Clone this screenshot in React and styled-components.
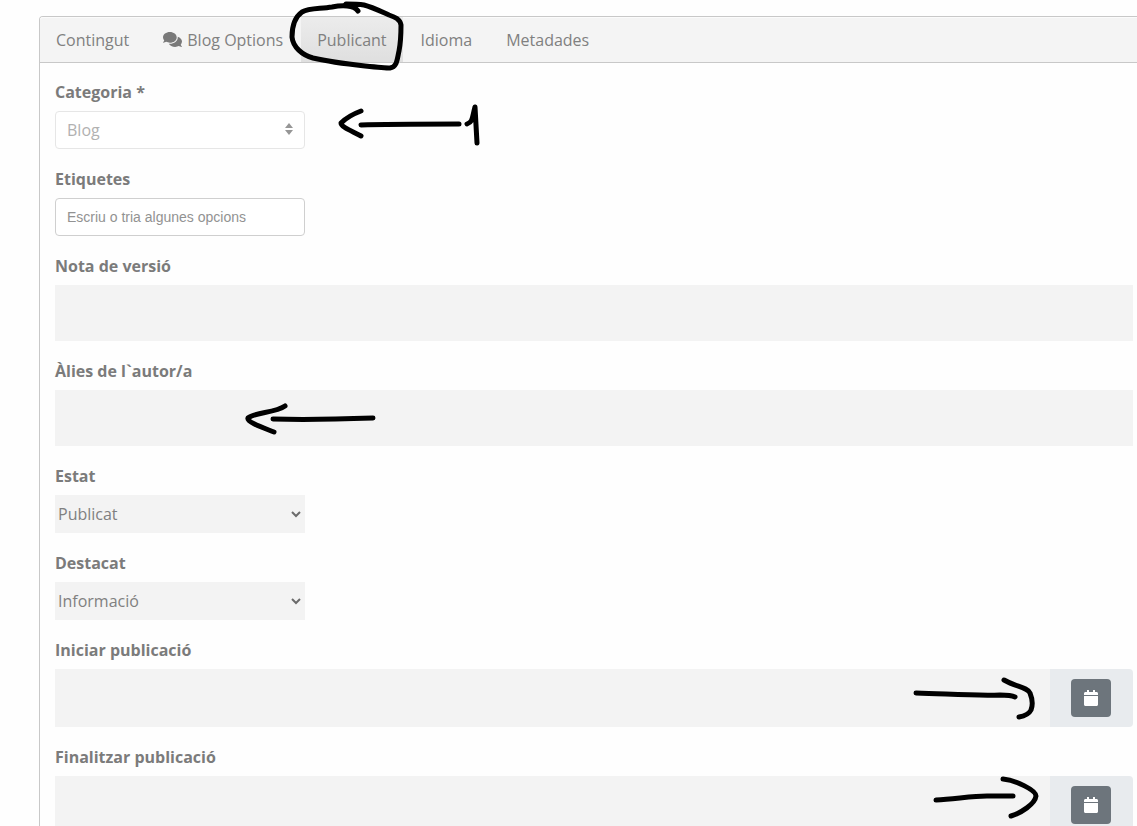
import React from "react";
import styled, { createGlobalStyle, css } from "styled-components";
import { FaCalendar, FaComments } from "react-icons/fa";

const GlobalStyle = createGlobalStyle`
  *, *::before, *::after { box-sizing: border-box; }
  body {
    margin: 0;
    background: #fefefe;
    color: #7b7b7b;
    font: 16px/24px "Open Sans", "Noto Sans", sans-serif;
  }
`;

const Page = styled.main`
  height: 100vh;
  overflow-x: hidden;
  overflow-y: auto;
  scrollbar-width: none;
  padding: 16px 0 0 39px;
`;

const Card = styled.section`
  border: 1px solid #c8c8c8;
  border-right: 0;
  border-radius: 4px 0 0 0;
`;

const TabBar = styled.nav`
  display: flex;
  gap: 2px;
  height: 46px;
  border-bottom: 1px solid #c8c8c8;
  border-radius: 3px 0 0 0;
  background: #f4f4f4;
  box-shadow: inset 0 1px 0 #fbfbfb;
`;

const TabItem = styled.div`
  position: relative;
  display: flex;
`;

const Tab = styled.button`
  display: flex;
  align-items: center;
  gap: 5px;
  padding: 0 16px;
  border: 0;
  background: ${(p) => (p.$active ? "linear-gradient(#ececec, #dfdfdf)" : "transparent")};
  color: #808080;
  font: inherit;
  white-space: nowrap;
  cursor: pointer;
`;

const CommentsIcon = styled(FaComments)`
  width: 19px;
  height: 17px;
  color: #797979;
`;

const Form = styled.form`
  display: flex;
  flex-direction: column;
  gap: 18px;
  padding: 17px 4px 18px 15px;
`;

const Field = styled.div`
  position: relative;
  display: flex;
  flex-direction: column;
  align-items: flex-start;
  gap: 7px;
`;

const Label = styled.label`
  color: #7b7b7b;
  font-weight: 700;
`;

const outlined = css`
  border: 1px solid ${(p) => (p.disabled ? "#e6e6e6" : "#cfcfcf")};
  border-radius: 4px;
  background: #fff;
  padding: 0 11px;
`;

const TagInput = styled.input`
  ${outlined}
  width: 250px;
  height: 38px;
  color: #7b7b7b;
  font: 14px "Liberation Sans", Arial, sans-serif;
  &::placeholder { color: #929292; opacity: 1; }
`;

const TextInput = styled.input`
  flex: 1;
  align-self: stretch;
  min-width: 0;
  min-height: 56px;
  padding: 0 12px;
  border: 0;
  background: #f3f3f3;
  color: inherit;
  font: inherit;
`;

const SelectBox = styled.div`
  position: relative;
  width: 250px;
  height: 38px;
`;

const Select = styled.select`
  appearance: none;
  width: 100%;
  height: 100%;
  padding: 0 3px;
  border: 0;
  border-radius: 0;
  background: #f3f3f3;
  color: #808080;
  font: inherit;
  opacity: 1;
  ${(p) => p.disabled && css`
    ${outlined}
    color: #b1b1b1;
  `}
`;

const SelectIcon = styled.svg`
  position: absolute;
  top: 0;
  bottom: 0;
  right: ${(p) => p.$right}px;
  margin: auto 0;
  pointer-events: none;
`;

const DateGroup = styled.div`
  display: flex;
  align-self: stretch;
  height: 58px;
`;

const Addon = styled.div`
  display: flex;
  align-items: center;
  justify-content: center;
  width: 83px;
  padding-right: 2px;
  border-radius: 0 4px 4px 0;
  background: #e8ebee;
`;

const CalendarButton = styled.button`
  display: flex;
  align-items: center;
  justify-content: center;
  width: 40px;
  height: 38px;
  padding: 0;
  border: 0;
  border-radius: 4px;
  background: #6d757c;
  color: #fff;
  cursor: pointer;
`;

const Mark = styled.svg`
  position: absolute;
  z-index: 1;
  top: ${(p) => p.$top}px;
  left: ${(p) => (p.$left === undefined ? "auto" : `${p.$left}px`)};
  right: ${(p) => (p.$right === undefined ? "auto" : `${p.$right}px`)};
  pointer-events: none;
  fill: none;
  stroke: #000;
  stroke-width: 5;
  stroke-linecap: round;
  stroke-linejoin: round;
`;

function PlainSelect({ id, value }) {
  return (
    <SelectBox>
      <Select id={id} defaultValue={value}>
        <option>{value}</option>
      </Select>
      <SelectIcon $right={4} width="10" height="8" viewBox="0 0 10 8">
        <path d="M1 2l4 4 4-4" fill="none" stroke="#6b6b6b" strokeWidth="2" />
      </SelectIcon>
    </SelectBox>
  );
}

function DateField({ id, label, children }) {
  return (
    <Field>
      <Label htmlFor={id}>{label}</Label>
      <DateGroup>
        <TextInput id={id} type="text" />
        <Addon>
          <CalendarButton type="button" aria-label={label}>
            <FaCalendar size={16} />
          </CalendarButton>
        </Addon>
      </DateGroup>
      {children}
    </Field>
  );
}

export default function App() {
  return (
    <>
      <GlobalStyle />
      <Page>
        <Card>
          <TabBar>
            <TabItem><Tab type="button">Contingut</Tab></TabItem>
            <TabItem><Tab type="button"><CommentsIcon />Blog Options</Tab></TabItem>
            <TabItem>
              <Tab type="button" $active>Publicant</Tab>
              <Mark $top={-17} $left={-13} width="120" height="74" viewBox="288 0 120 74">
                <path d="M358 11C354 5 342 5 332 7C320 9 309 8 302 12C295 17 292 27 292 37C293 47 302 55 313 58C330 62 347 64 365 66C375 67 386 68 390 68C397 67 397 60 399 51C401 41 401 32 401 25C400 19 395 17 389 15C380 11 372 7 364 5C358 4 352 4 346 4" />
              </Mark>
            </TabItem>
            <TabItem><Tab type="button">Idioma</Tab></TabItem>
            <TabItem><Tab type="button">Metadades</Tab></TabItem>
          </TabBar>
          <Form>
            <Field>
              <Label htmlFor="category">Categoria *</Label>
              <SelectBox>
                <Select id="category" defaultValue="Blog" disabled>
                  <option>Blog</option>
                </Select>
                <SelectIcon $right={12} width="8" height="14" viewBox="0 0 8 14">
                  <path d="M0 5l4-5 4 5zM0 7h8l-4 5z" fill="#969696" />
                </SelectIcon>
              </SelectBox>
              <Mark $top={20} $left={280} width="150" height="50" viewBox="335 100 150 50">
                <path d="M361 111C353 114 345 119 341 123C341 127 352 131 361 136M361 125C385 124 405 124 459 124M467 124C473 122 472 118 475 107L477 143" />
              </Mark>
            </Field>
            <Field>
              <Label htmlFor="tags">Etiquetes</Label>
              <TagInput id="tags" type="text" placeholder="Escriu o tria algunes opcions" />
            </Field>
            <Field>
              <Label htmlFor="version">Nota de versió</Label>
              <TextInput id="version" type="text" />
            </Field>
            <Field>
              <Label htmlFor="alias">Àlies de l`autor/a</Label>
              <TextInput id="alias" type="text" />
              <Mark $top={41} $left={185} width="140" height="40" viewBox="240 400 140 40">
                <path d="M285 406C275 413 255 412 248 418C246 422 264 428 274 432M273 419C305 420 345 419 373 418" />
              </Mark>
            </Field>
            <Field>
              <Label htmlFor="state">Estat</Label>
              <PlainSelect id="state" value="Publicat" />
            </Field>
            <Field>
              <Label htmlFor="featured">Destacat</Label>
              <PlainSelect id="featured" value="Informació" />
            </Field>
            <DateField id="start" label="Iniciar publicació">
              <Mark $top={32} $right={93} width="130" height="60" viewBox="910 670 130 60">
                <path d="M916 693C950 694 975 696 1000 695C1008 695 1013 696 1015 697M1004 680C1016 687 1027 687 1030 693C1032 698 1033 705 1031 710C1029 714 1025 716 1019 717" />
              </Mark>
            </DateField>
            <DateField id="finish" label="Finalitzar publicació">
              <Mark $top={25} $right={93} width="115" height="60" viewBox="925 770 115 60">
                <path d="M936 800C955 799 972 796 987 796L1013 796M1003 779C1015 780 1036 790 1036 796C1035 804 1021 813 1011 816" />
              </Mark>
            </DateField>
          </Form>
        </Card>
      </Page>
    </>
  );
}
